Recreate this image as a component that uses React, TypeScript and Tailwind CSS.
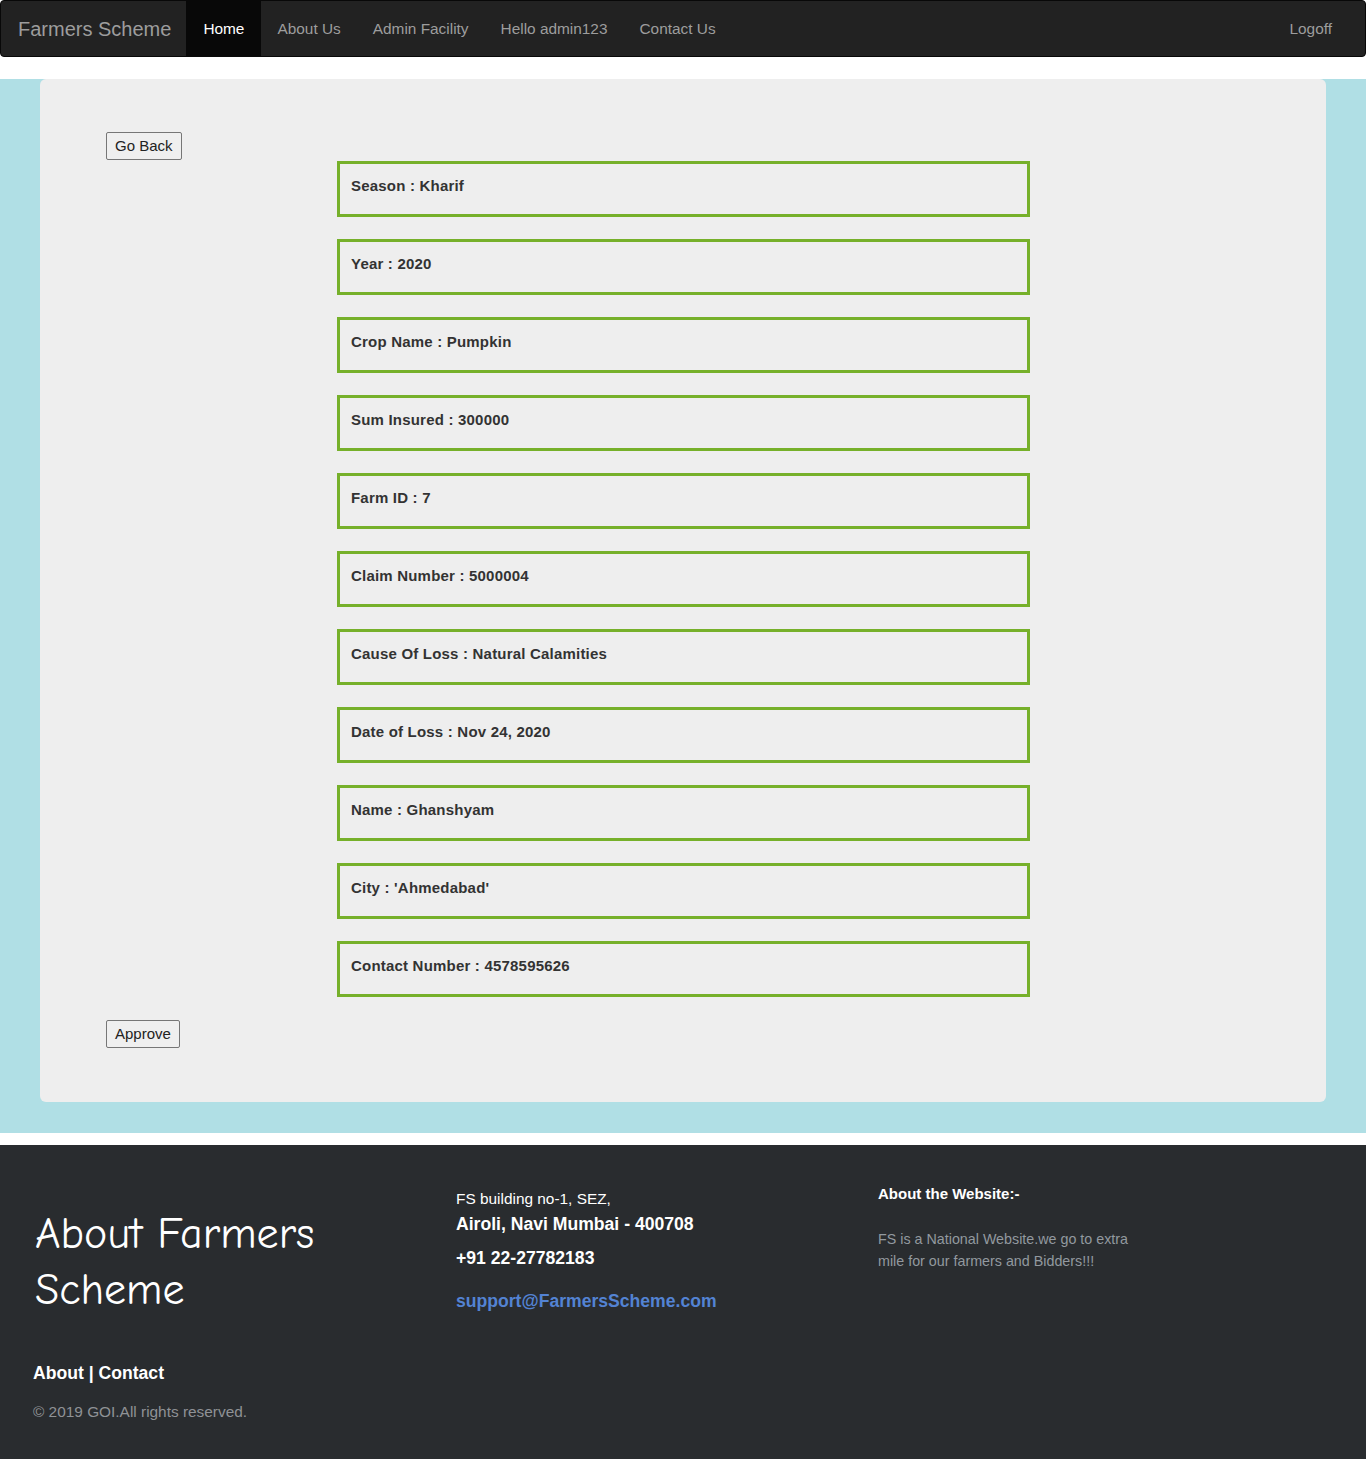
const details: [string, string][] = [
  ["Season", "Kharif"],
  ["Year", "2020"],
  ["Crop Name", "Pumpkin"],
  ["Sum Insured", "300000"],
  ["Farm ID", "7"],
  ["Claim Number", "5000004"],
  ["Cause Of Loss", "Natural Calamities"],
  ["Date of Loss", "Nov 24, 2020"],
  ["Name", "Ghanshyam"],
  ["City", "'Ahmedabad'"],
  ["Contact Number", "4578595626"],
];

const navLinks = ["About Us", "Admin Facility", "Hello admin123", "Contact Us"];

export default function App() {
  const btn =
    "rounded-[2px] border border-[#767676] bg-[#efefef] px-[8px] text-[15px] leading-[26px] text-[#222]";

  return (
    <div className="min-h-[1459px] bg-white font-['Liberation_Sans',Arial,sans-serif]">
      {/* Navbar */}
      <nav className="flex h-[57px] items-stretch rounded-[4px] border border-[#080808] bg-[#222222] text-[15.4px] text-[#9d9d9d]">
        <span className="flex items-center pl-[17px] pr-[15px] text-[20px]">Farmers Scheme</span>
        <a className="flex items-center bg-[#080808] px-[17px] text-white">Home</a>
        {navLinks.map((l) => (
          <a key={l} className="flex items-center px-[16px]">
            {l}
          </a>
        ))}
        <a className="ml-auto flex items-center pr-[33px]">Logoff</a>
      </nav>

      {/* Content */}
      <div className="mt-[22px] bg-[#b0dfe5] px-[40px] pb-[31px]">
        <div className="rounded-[6px] bg-[#eeeeee] pb-[54px] pl-[66px] pt-[53px]">
          <button className={btn}>Go Back</button>
          <div className="ml-[231px] mt-px flex w-[693px] flex-col gap-[22px]">
            {details.map(([k, v]) => (
              <div
                key={k}
                className="h-[56px] border-[3px] border-[#76b02a] px-[11px] pt-[11px] text-[15px] font-bold tracking-[0.2px] text-[#333333]"
              >
                {k} : {v}
              </div>
            ))}
          </div>
          <button className={`${btn} mt-[23px]`}>Approve</button>
        </div>
      </div>

      {/* Footer */}
      <footer className="mt-[12px] grid h-[314px] grid-cols-[423px_422px_1fr] bg-[#292c2f] pl-[33px] text-white">
        <div className="pt-[61px]">
          <h2 className="pl-[2px] font-['Comic_Sans_MS','Comic_Neue',cursive] text-[44px] leading-[56px]">
            About Farmers
            <br />
            Scheme
          </h2>
          <p className="mt-[42px] text-[17.6px] font-bold">About | Contact</p>
          <p className="mt-[14px] text-[15.4px] text-[#8f9296]">© 2019 GOI.All rights reserved.</p>
        </div>
        <div className="pt-[42px]">
          <p className="text-[15.4px]">FS building no-1, SEZ,</p>
          <p className="mt-px text-[17.6px] font-bold">Airoli, Navi Mumbai - 400708</p>
          <p className="mt-[7px] text-[17.6px] font-bold">+91 22-27782183</p>
          <p className="mt-[17px] text-[17.6px] font-bold text-[#5383d3]">support@FarmersScheme.com</p>
        </div>
        <div className="pt-[38px]">
          <p className="text-[15px] font-bold">About the Website:-</p>
          <p className="mt-[22px] w-[270px] text-[14.3px] leading-[22px] text-[#92999f]">
            FS is a National Website.we go to extra mile for our farmers and Bidders!!!
          </p>
        </div>
      </footer>
    </div>
  );
}
